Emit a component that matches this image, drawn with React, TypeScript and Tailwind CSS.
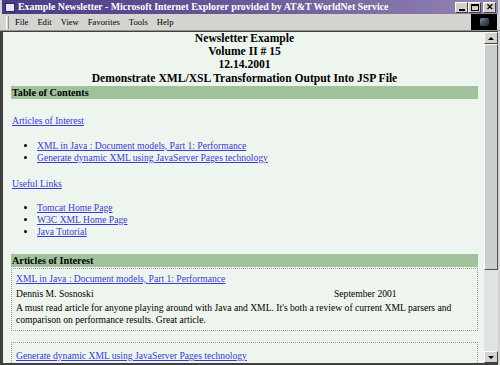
import React from 'react'

const serif = "font-['Liberation_Serif','Times_New_Roman',serif]"

function TitleButton({ children }: { children: React.ReactNode }) {
  return (
    <div className="w-[13px] h-[11px] bg-[#d4d0c8] border-t border-l border-white border-r border-b border-r-[#404040] border-b-[#404040] flex items-center justify-center text-[9px] leading-none font-bold text-black">
      {children}
    </div>
  )
}

const tocArticles = [
  'XML in Java : Document models, Part 1: Performance',
  'Generate dynamic XML using JavaServer Pages technology',
]

const usefulLinks = ['Tomcat Home Page', 'W3C XML Home Page', 'Java Tutorial']

export default function App() {
  const link = 'text-[#3a3ad0] underline'
  const bar = 'bg-[#a0c19c] font-bold text-[10.2px] leading-[13px] px-[1px]'

  return (
    <div className={`w-[500px] h-[365px] overflow-hidden bg-[#d4d4d0] flex flex-col ${serif}`}>
      {/* title bar */}
      <div className="h-[14px] mx-[2px] bg-gradient-to-r from-[#4a3a86] via-[#6a5a98] to-[#9484b4] flex items-center pl-[3px] pr-[2px]">
        <div className="w-[10px] h-[9px] bg-[#e8e8f0] border border-[#203060] mr-[3px]" />
        <span className="text-white font-bold text-[9.9px] leading-none whitespace-nowrap">
          Example Newsletter - Microsoft Internet Explorer provided by AT&amp;T WorldNet Service
        </span>
        <div className="ml-auto flex gap-0">
          <TitleButton>
            <span className="block w-[6px] h-[2px] bg-black mt-[5px]" />
          </TitleButton>
          <TitleButton>
            <span className="block w-[8px] h-[7px] border border-black border-t-2" />
          </TitleButton>
          <div className="w-[2px]" />
          <TitleButton>✕</TitleButton>
        </div>
      </div>

      {/* menu bar */}
      <div className="h-[17px] flex items-center pl-[6px] pr-[3px] border-b border-[#909090]">
        <div className="w-[3px] h-[13px] border-l border-white border-r border-r-[#909090] mr-[6px]" />
        <div className="flex gap-[9px] text-[8.6px] text-black">
          <span>File</span>
          <span>Edit</span>
          <span>View</span>
          <span>Favorites</span>
          <span>Tools</span>
          <span>Help</span>
        </div>
        <div className="ml-auto w-[26px] h-[16px] bg-black flex items-center justify-center">
          <div className="w-[9px] h-[8px] rounded-[2px] bg-gradient-to-br from-[#8090a0] via-[#405060] to-[#203020]" />
        </div>
      </div>

      {/* content frame */}
      <div className="flex-1 flex border-l-[3px] border-t border-[#404040] border-b-2 mr-[2px] min-h-0">
        <div className="flex-1 bg-[#eef5ee] pl-[8px] pr-[6px] text-black text-[9.6px] leading-[12px] min-h-0 overflow-hidden">
          <div className="text-center font-bold text-[11.6px] leading-[13.2px]">
            <div>Newsletter Example</div>
            <div>Volume II # 15</div>
            <div>12.14.2001</div>
            <div>Demonstrate XML/XSL Transformation Output Into JSP File</div>
          </div>

          <div className={`mt-[1px] ${bar}`}>Table of Contents</div>

          <div className="mt-[16px] ml-[1px]">
            <a className={link}>Articles of Interest</a>
          </div>
          <ul className="mt-[13px] pl-[26px] list-disc">
            {tocArticles.map((t) => (
              <li key={t}>
                <a className={link}>{t}</a>
              </li>
            ))}
          </ul>

          <div className="mt-[14px] ml-[1px]">
            <a className={link}>Useful Links</a>
          </div>
          <ul className="mt-[12px] pl-[26px] list-disc">
            {usefulLinks.map((t) => (
              <li key={t}>
                <a className={link}>{t}</a>
              </li>
            ))}
          </ul>

          <div className={`mt-[16px] ${bar}`}>Articles of Interest</div>

          <div className="mt-[1px] border border-dotted border-[#98a098] px-[4px] pt-[4px] pb-[4px]">
            <a className={link}>XML in Java : Document models, Part 1: Performance</a>
            <div className="flex mt-[3px]">
              <span className="w-[318px]">Dennis M. Sosnoski</span>
              <span>September 2001</span>
            </div>
            <p className="mt-[2px] pr-[20px]">
              A must read article for anyone playing around with Java and XML. It's both a review of current XML parsers and comparison on performance results. Great article.
            </p>
          </div>

          <div className="mt-[11px] border border-dotted border-[#98a098] px-[4px] pt-[7px] pb-[6px]">
            <a className={link}>Generate dynamic XML using JavaServer Pages technology</a>
          </div>
        </div>

        {/* scrollbar */}
        <div className="w-[14px] bg-[#dfe4e0] flex flex-col">
          <div className="h-[12px] bg-[#d4d4d0] border-t border-l border-white border-r border-b border-r-[#404040] border-b-[#404040] flex items-center justify-center">
            <span className="block w-0 h-0 border-l-[3px] border-r-[3px] border-b-[3px] border-l-transparent border-r-transparent border-b-black" />
          </div>
          <div className="h-[226px] bg-[#c8d0cc] border-t border-l border-white border-r border-b border-r-[#505050] border-b-[#505050]" />
          <div className="flex-1" />
          <div className="h-[12px] bg-[#d4d4d0] border-t border-l border-white border-r border-b border-r-[#404040] border-b-[#404040] flex items-center justify-center">
            <span className="block w-0 h-0 border-l-[3px] border-r-[3px] border-t-[3px] border-l-transparent border-r-transparent border-t-black" />
          </div>
        </div>
      </div>
    </div>
  )
}
